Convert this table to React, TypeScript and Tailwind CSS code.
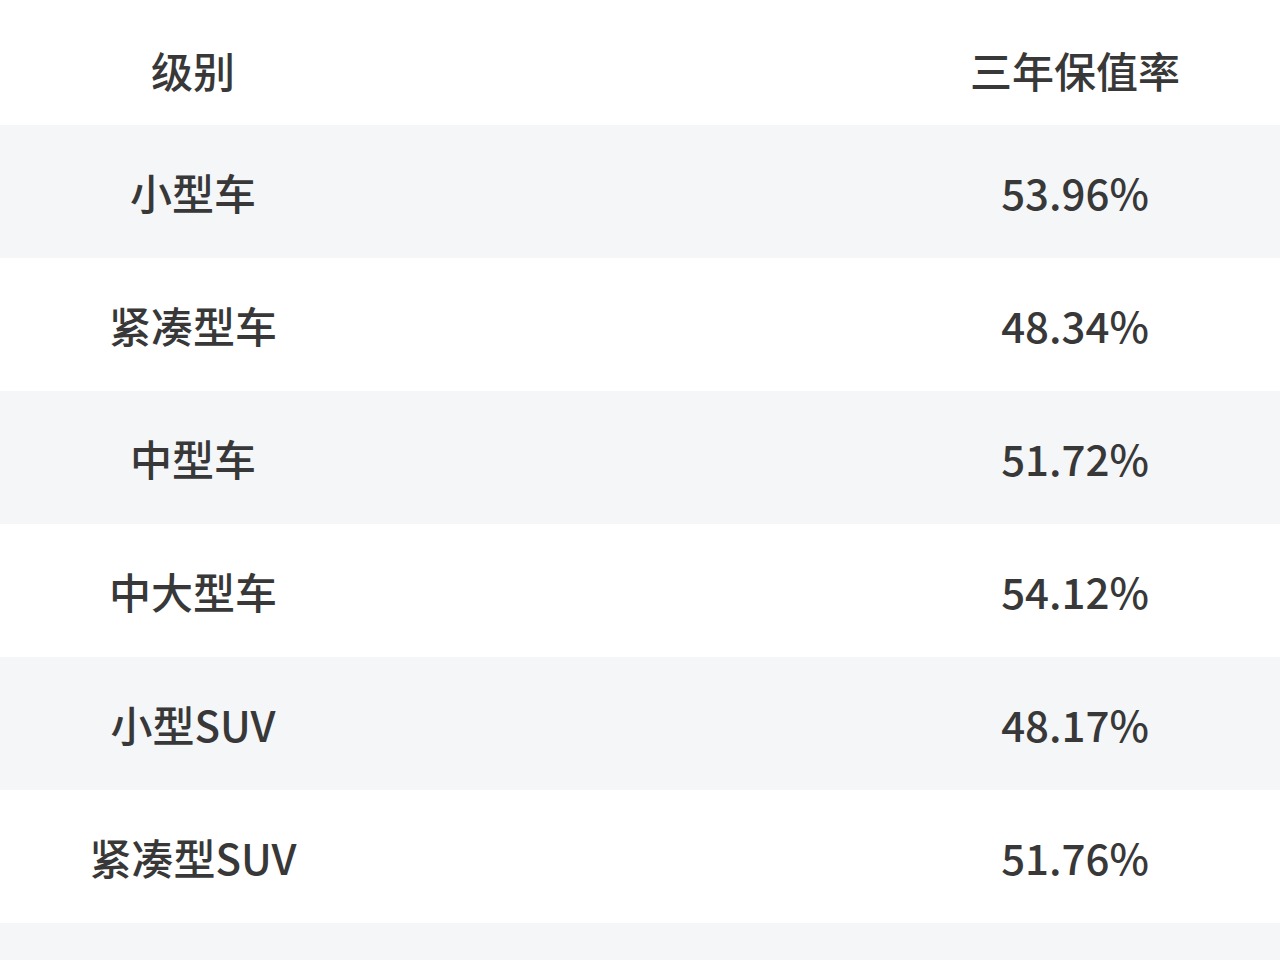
const rows = [
  { level: '小型车', rate: '53.96%' },
  { level: '紧凑型车', rate: '48.34%' },
  { level: '中型车', rate: '51.72%' },
  { level: '中大型车', rate: '54.12%' },
  { level: '小型SUV', rate: '48.17%' },
  { level: '紧凑型SUV', rate: '51.76%' },
  { level: '', rate: '' },
]

export default function App() {
  return (
    <div
      className="w-[1280px] h-[960px] overflow-hidden bg-white text-[#383838] text-[42px] font-medium"
      style={{ fontFamily: '"Noto Sans CJK SC", "Noto Sans", sans-serif' }}
    >
      <div className="grid grid-cols-[386px_1fr_410px] h-[125px] items-center pt-[15px]">
        <div className="text-center leading-none">级别</div>
        <div />
        <div className="text-center leading-none">三年保值率</div>
      </div>
      {rows.map((r, i) => (
        <div
          key={i}
          className={
            'grid grid-cols-[386px_1fr_410px] h-[133px] items-center ' +
            (i % 2 === 0 ? 'bg-[#f5f6f8]' : 'bg-white')
          }
        >
          <div className="text-center leading-none">{r.level}</div>
          <div />
          <div className="text-center leading-none">{r.rate}</div>
        </div>
      ))}
    </div>
  )
}
